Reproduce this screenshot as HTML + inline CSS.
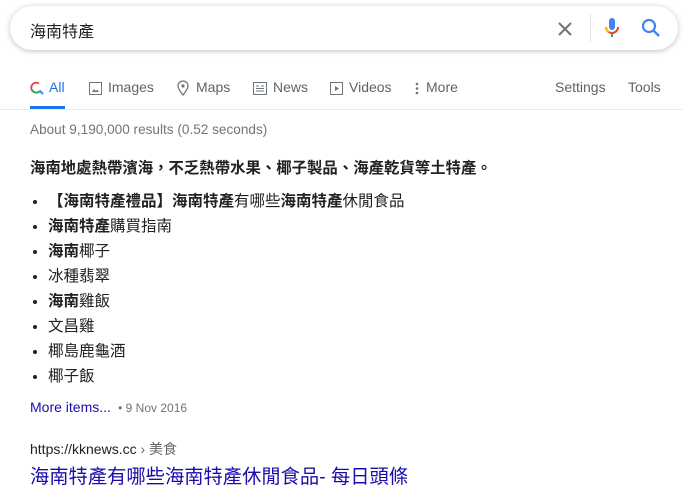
<!DOCTYPE html>
<html><head><meta charset="utf-8"><style>
body{margin:0;width:683px;height:500px;overflow:hidden;background:#fff;font-family:"Liberation Sans","Noto Sans CJK TC",sans-serif;color:#202124;position:relative}
.a{position:absolute;white-space:nowrap}
.sb{position:absolute;left:10px;top:6px;width:668px;height:44px;border-radius:22px;box-shadow:0 1px 6px rgba(32,33,36,.28);background:#fff}
.tab{position:absolute;top:79px;font-size:14px;color:#5f6368}
li{height:25px;line-height:25px}
b{font-weight:bold}
</style></head><body>
<div class="sb"></div>
<div class="a" style="left:30px;top:18px;font-size:16px">海南特產</div>
<svg class="a" style="left:556px;top:20px" width="18" height="18" viewBox="0 0 18 18"><path d="M3 3L15 15M15 3L3 15" stroke="#70757a" stroke-width="2"/></svg>
<div class="a" style="left:590px;top:14px;width:1px;height:28px;background:#dfe1e5"></div>
<svg class="a" style="left:603px;top:17px" width="18" height="22" viewBox="0 0 18 22"><rect x="6" y="1" width="6" height="12" rx="3" fill="#4285f4"/><path d="M3 10a6 6 0 0 0 12 0" stroke="#ea4335" stroke-width="2" fill="none"/><path d="M9 16v4" stroke="#34a853" stroke-width="2"/><path d="M3 10a6 6 0 0 0 3 5" stroke="#fbbc05" stroke-width="2" fill="none"/></svg>
<svg class="a" style="left:641px;top:18px" width="20" height="20" viewBox="0 0 20 20"><circle cx="8" cy="8" r="6" stroke="#4285f4" stroke-width="2.2" fill="none"/><path d="M12.5 12.5L18 18" stroke="#4285f4" stroke-width="2.4"/></svg>

<svg class="a" style="left:30px;top:81px" width="14" height="14" viewBox="0 0 14 14"><path d="M9 2.5A5 5 0 1 0 10 10" stroke="#ea4335" stroke-width="1.8" fill="none"/><path d="M2 9A5 5 0 0 0 10 10" stroke="#34a853" stroke-width="1.8" fill="none"/><path d="M9.5 9.5L13 13" stroke="#4285f4" stroke-width="2"/></svg>
<div class="tab" style="left:49px;color:#1a73e8">All</div>
<div class="a" style="left:30px;top:106px;width:35px;height:3px;background:#1a73e8"></div>
<div class="a" style="left:0;top:109px;width:683px;height:1px;background:#ebebeb"></div>
<svg class="a" style="left:89px;top:82px" width="13" height="13" viewBox="0 0 13 13"><rect x="0.5" y="0.5" width="12" height="12" fill="none" stroke="#70757a"/><path d="M3 10l2-3 2 2 1.5-1.5L10 10z" fill="#70757a"/></svg>
<div class="tab" style="left:108px">Images</div>
<svg class="a" style="left:177px;top:80px" width="12" height="16" viewBox="0 0 12 16"><path d="M6 15C2 10 1 8 1 6a5 5 0 0 1 10 0c0 2-1 4-5 9z" fill="none" stroke="#70757a" stroke-width="1.3"/><circle cx="6" cy="6" r="1.6" fill="#70757a"/></svg>
<div class="tab" style="left:196px">Maps</div>
<svg class="a" style="left:253px;top:82px" width="14" height="13" viewBox="0 0 14 13"><rect x="0.5" y="0.5" width="13" height="12" fill="none" stroke="#70757a"/><path d="M3 4h3M3 6.5h8M3 9h8M8 4h3" stroke="#70757a"/></svg>
<div class="tab" style="left:273px">News</div>
<svg class="a" style="left:330px;top:82px" width="13" height="13" viewBox="0 0 13 13"><rect x="0.5" y="0.5" width="12" height="12" fill="none" stroke="#70757a"/><path d="M5 4v5l4-2.5z" fill="#70757a"/></svg>
<div class="tab" style="left:349px">Videos</div>
<svg class="a" style="left:415px;top:82px" width="4" height="13" viewBox="0 0 4 13"><circle cx="2" cy="2" r="1.3" fill="#70757a"/><circle cx="2" cy="6.5" r="1.3" fill="#70757a"/><circle cx="2" cy="11" r="1.3" fill="#70757a"/></svg>
<div class="tab" style="left:426px">More</div>
<div class="tab" style="left:555px">Settings</div>
<div class="tab" style="left:628px">Tools</div>

<div class="a" style="left:30px;top:122px;font-size:13.6px;color:#70757a">About 9,190,000 results (0.52 seconds)</div>
<div class="a" style="left:30px;top:156px;font-size:15.4px;font-weight:bold">海南地處熱帶濱海，不乏熱帶水果、椰子製品、海產乾貨等土特產。</div>
<ul class="a" style="left:0;top:189px;margin:0;padding-left:48px;font-size:15.5px">
<li><b>【海南特產禮品】海南特產</b>有哪些<b>海南特產</b>休閒食品</li>
<li><b>海南特產</b>購買指南</li>
<li><b>海南</b>椰子</li>
<li>冰種翡翠</li>
<li><b>海南</b>雞飯</li>
<li>文昌雞</li>
<li>椰島鹿龜酒</li>
<li>椰子飯</li>
</ul>
<div class="a" style="left:30px;top:399px;font-size:14px;color:#1a0dab">More items... <span style="color:#70757a;font-size:12px">&nbsp;•&nbsp;9 Nov 2016</span></div>
<div class="a" style="left:30px;top:439px;font-size:14px;color:#202124">https://kknews.cc <span style="color:#5f6368">› 美食</span></div>
<div class="a" style="left:30px;top:461px;font-size:19.3px;color:#1a0dab">海南特產有哪些海南特產休閒食品- 每日頭條</div>
</body></html>
